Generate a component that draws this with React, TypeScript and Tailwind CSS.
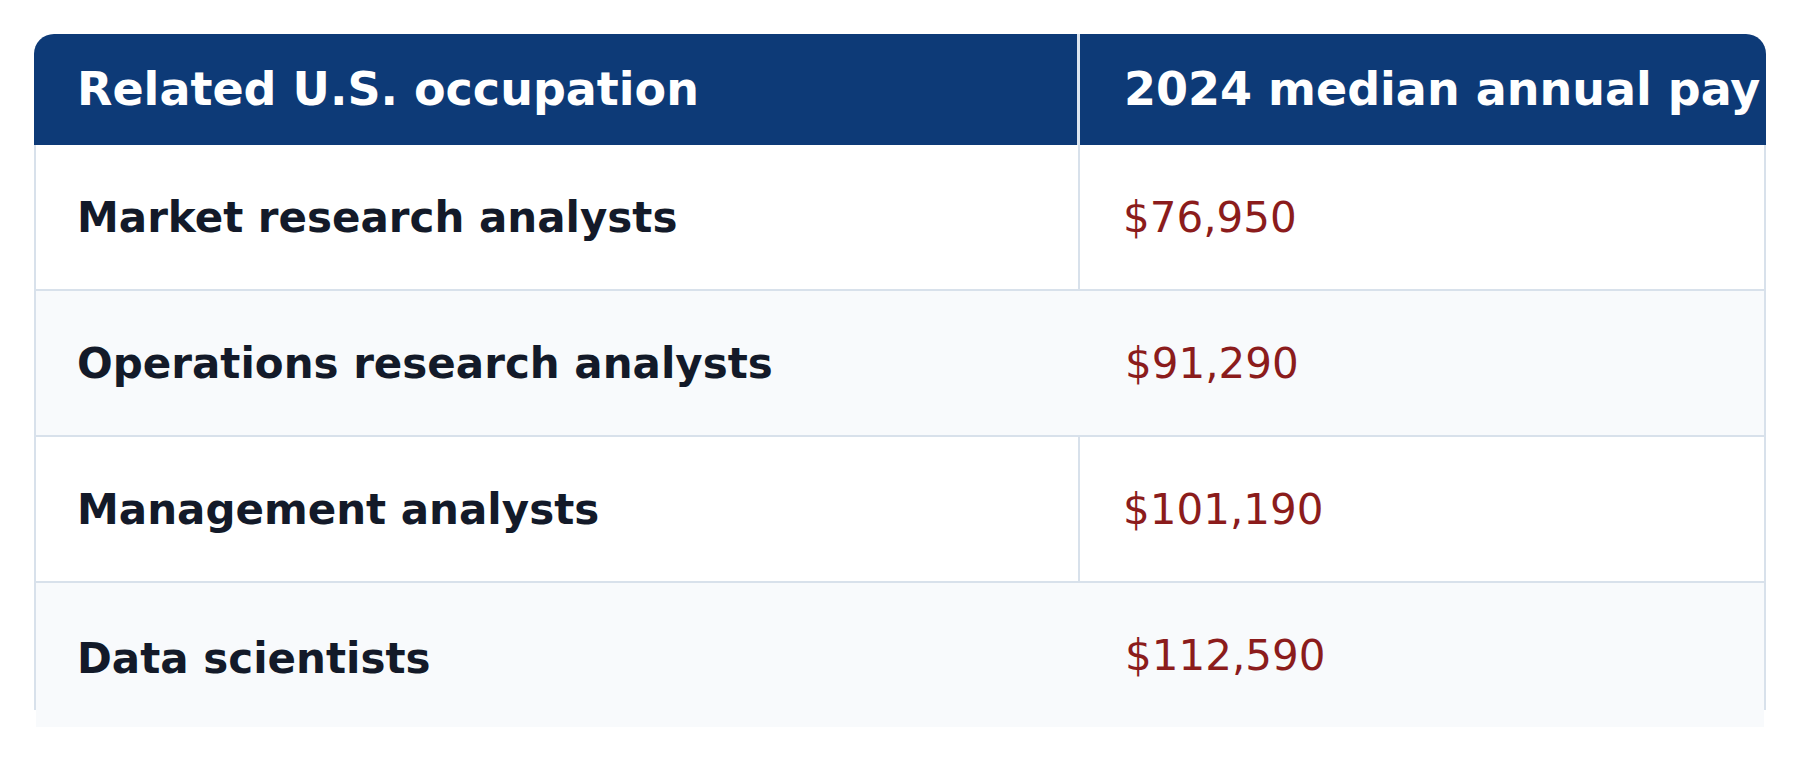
import React from "react";

const rows = [
  { name: "Market research analysts", pay: "$76,950" },
  { name: "Operations research analysts", pay: "$91,290" },
  { name: "Management analysts", pay: "$101,190" },
  { name: "Data scientists", pay: "$112,590" },
];

export default function App() {
  return (
    <div className="w-[1800px] h-[760px] bg-white p-[34px] overflow-hidden" style={{ fontFamily: '"DejaVu Sans", "Liberation Sans", sans-serif' }}>
      <div className="w-[1732px]">
        {/* header */}
        <div className="flex h-[111px] bg-[#0d3a77] rounded-t-[20px] text-white text-[46px] font-bold">
          <div className="w-[1046px] shrink-0 border-r-[3px] border-[#dbe5ef] flex items-center pl-[43px]">
            Related U.S. occupation
          </div>
          <div className="flex-1 flex items-center pl-[44px] whitespace-nowrap">2024 median annual pay</div>
        </div>

        {/* row 1 */}
        <div className="flex h-[146px] bg-white border-x-2 border-b-2 border-[#d8e1eb]">
          <div className="w-[1044px] shrink-0 border-r-2 border-[#d8e1eb] flex items-center pl-[41px] text-[42px] font-bold text-[#131a29]">
            {rows[0].name}
          </div>
          <div className="flex-1 flex items-center pl-[43px] text-[42px] text-[#8b1c1c]">{rows[0].pay}</div>
        </div>

        {/* row 2 */}
        <div className="flex h-[146px] bg-[#f8fafc] border-x-2 border-b-2 border-[#d8e1eb]">
          <div className="w-[1046px] shrink-0 flex items-center pl-[41px] text-[42px] font-bold text-[#131a29]">
            {rows[1].name}
          </div>
          <div className="flex-1 flex items-center pl-[43px] text-[42px] text-[#8b1c1c]">{rows[1].pay}</div>
        </div>

        {/* row 3 */}
        <div className="flex h-[146px] bg-white border-x-2 border-b-2 border-[#d8e1eb]">
          <div className="w-[1044px] shrink-0 border-r-2 border-[#d8e1eb] flex items-center pl-[41px] text-[42px] font-bold text-[#131a29]">
            {rows[2].name}
          </div>
          <div className="flex-1 flex items-center pl-[43px] text-[42px] text-[#8b1c1c]">{rows[2].pay}</div>
        </div>

        {/* row 4 */}
        <div className="flex flex-col">
          <div className="flex h-[127px] pt-[17px] bg-[#f8fafc] border-x-2 border-[#d8e1eb]">
            <div className="w-[1046px] shrink-0 flex items-center pl-[41px] pt-[6px] text-[42px] font-bold text-[#131a29]">
              {rows[3].name}
            </div>
            <div className="flex-1 flex items-center pl-[43px] text-[42px] text-[#8b1c1c]">{rows[3].pay}</div>
          </div>
          <div className="h-[17px] mx-[2px] bg-[#f8fafc]"></div>
        </div>
      </div>
    </div>
  );
}
